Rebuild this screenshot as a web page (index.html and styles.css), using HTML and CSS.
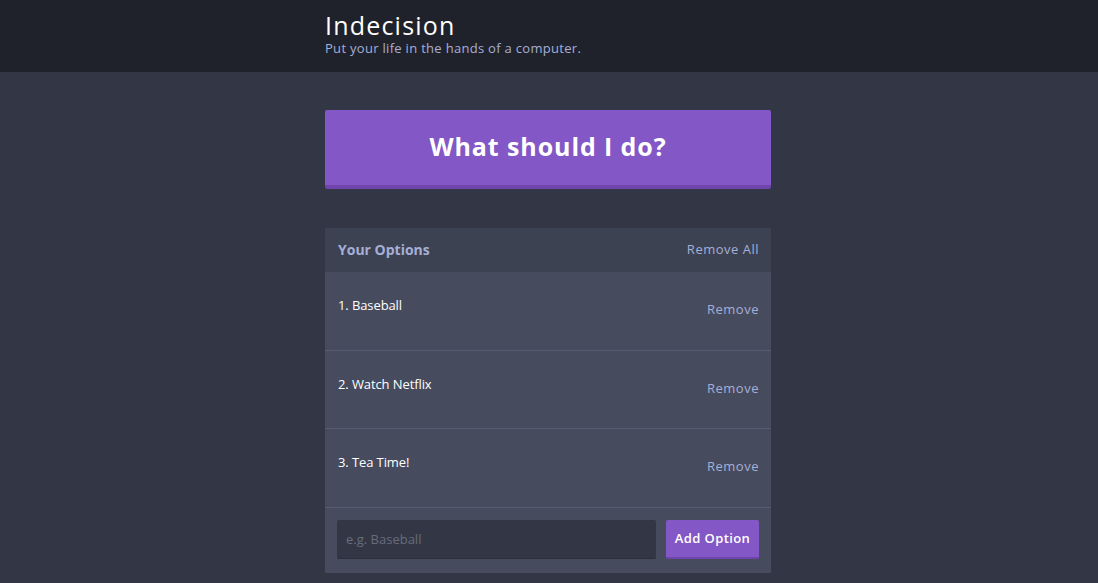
FILE: index.html
```html
<!DOCTYPE html>
<html lang="en">
<head>
<meta charset="utf-8">
<title>Indecision</title>
<link rel="stylesheet" href="styles.css">
</head>
<body>
<header class="header">
  <div class="container">
    <h1 class="header__title">Indecision</h1>
    <h2 class="header__subtitle">Put your life in the hands of a computer.</h2>
  </div>
</header>
<main class="container">
  <button class="big-button">What should I do?</button>
  <section class="widget">
    <div class="widget-header">
      <h3 class="widget-header__title">Your Options</h3>
      <button class="button--link">Remove All</button>
    </div>
    <div class="option">
      <p class="option__text">1. Baseball</p>
      <button class="button--link">Remove</button>
    </div>
    <div class="option">
      <p class="option__text">2. Watch Netflix</p>
      <button class="button--link">Remove</button>
    </div>
    <div class="option">
      <p class="option__text">3. Tea Time!</p>
      <button class="button--link">Remove</button>
    </div>
    <form class="add-option">
      <input class="add-option__input" type="text" placeholder="e.g. Baseball">
      <button class="button" type="button">Add Option</button>
    </form>
  </section>
</main>
</body>
</html>
```
FILE: styles.css
```css
* { box-sizing: border-box; }
html, body { margin: 0; padding: 0; height: 100%; }
body {
  background: #333745;
  font-family: "Open Sans", "Liberation Sans", sans-serif;
  color: #ffffff;
  overflow: hidden;
}
.container {
  width: 446px;
  margin: 0 0 0 calc(50% - 224px);
}
.header {
  background: #20222b;
  height: 72px;
  padding-top: 9px;
}
.header__title {
  margin: 0;
  font-size: 25px;
  font-weight: 400;
  line-height: 32px;
  letter-spacing: 1.2px;
  color: #ffffff;
}
.header__subtitle {
  margin: 0;
  font-size: 13px;
  font-weight: 400;
  line-height: 14px;
  letter-spacing: 0.3px;
  color: #a5afd7;
}
.big-button {
  display: block;
  width: 100%;
  margin: 38px 0 39px;
  height: 79px;
  padding: 0 0 3px;
  border: none;
  border-bottom: 4px solid #6f45ad;
  border-radius: 2px;
  background: #8357c5;
  color: #ffffff;
  font-family: inherit;
  font-size: 25px;
  font-weight: 700;
  letter-spacing: 0.9px;
  cursor: pointer;
}
.widget {
  background: #464b5e;
  margin-bottom: 10px;
}
.widget-header {
  display: flex;
  justify-content: space-between;
  align-items: center;
  background: #3c4251;
  height: 44px;
  padding: 0 12px 2px 13px;
}
.widget-header__title {
  margin: 0;
  font-size: 14px;
  font-weight: 700;
  color: #a5afd7;
}
.button--link {
  background: none;
  border: none;
  padding: 0;
  font-family: inherit;
  font-size: 13px;
  letter-spacing: 0.5px;
  color: #a5afd7;
  cursor: pointer;
}
.option {
  display: flex;
  justify-content: space-between;
  align-items: center;
  height: 78.5px;
  padding: 0 12px 3px 13px;
  border-bottom: 1px solid #575c70;
}
.option__text {
  margin: 0 0 8px;
  font-size: 13px;
  font-weight: 500;
  letter-spacing: -0.1px;
  color: #ffffff;
}
.add-option {
  display: flex;
  gap: 10px;
  padding: 12px 12px 14px 12px;
}
.add-option__input {
  flex: 1;
  height: 39px;
  background: #333745;
  border: none;
  border-bottom: 1px solid #2b2e3b;
  border-radius: 2px;
  padding: 0 9px;
  color: #a5afd7;
  font-family: inherit;
  font-size: 13px;
  outline: none;
}
.add-option__input::placeholder { color: #676b7b; }
.button {
  width: 93px;
  height: 39px;
  background: #8357c5;
  border: none;
  border-bottom: 2px solid #6f45ad;
  border-radius: 2px;
  color: #ffffff;
  font-family: inherit;
  font-size: 13px;
  font-weight: 600;
  letter-spacing: 0.4px;
  padding: 0;
  cursor: pointer;
}
```
